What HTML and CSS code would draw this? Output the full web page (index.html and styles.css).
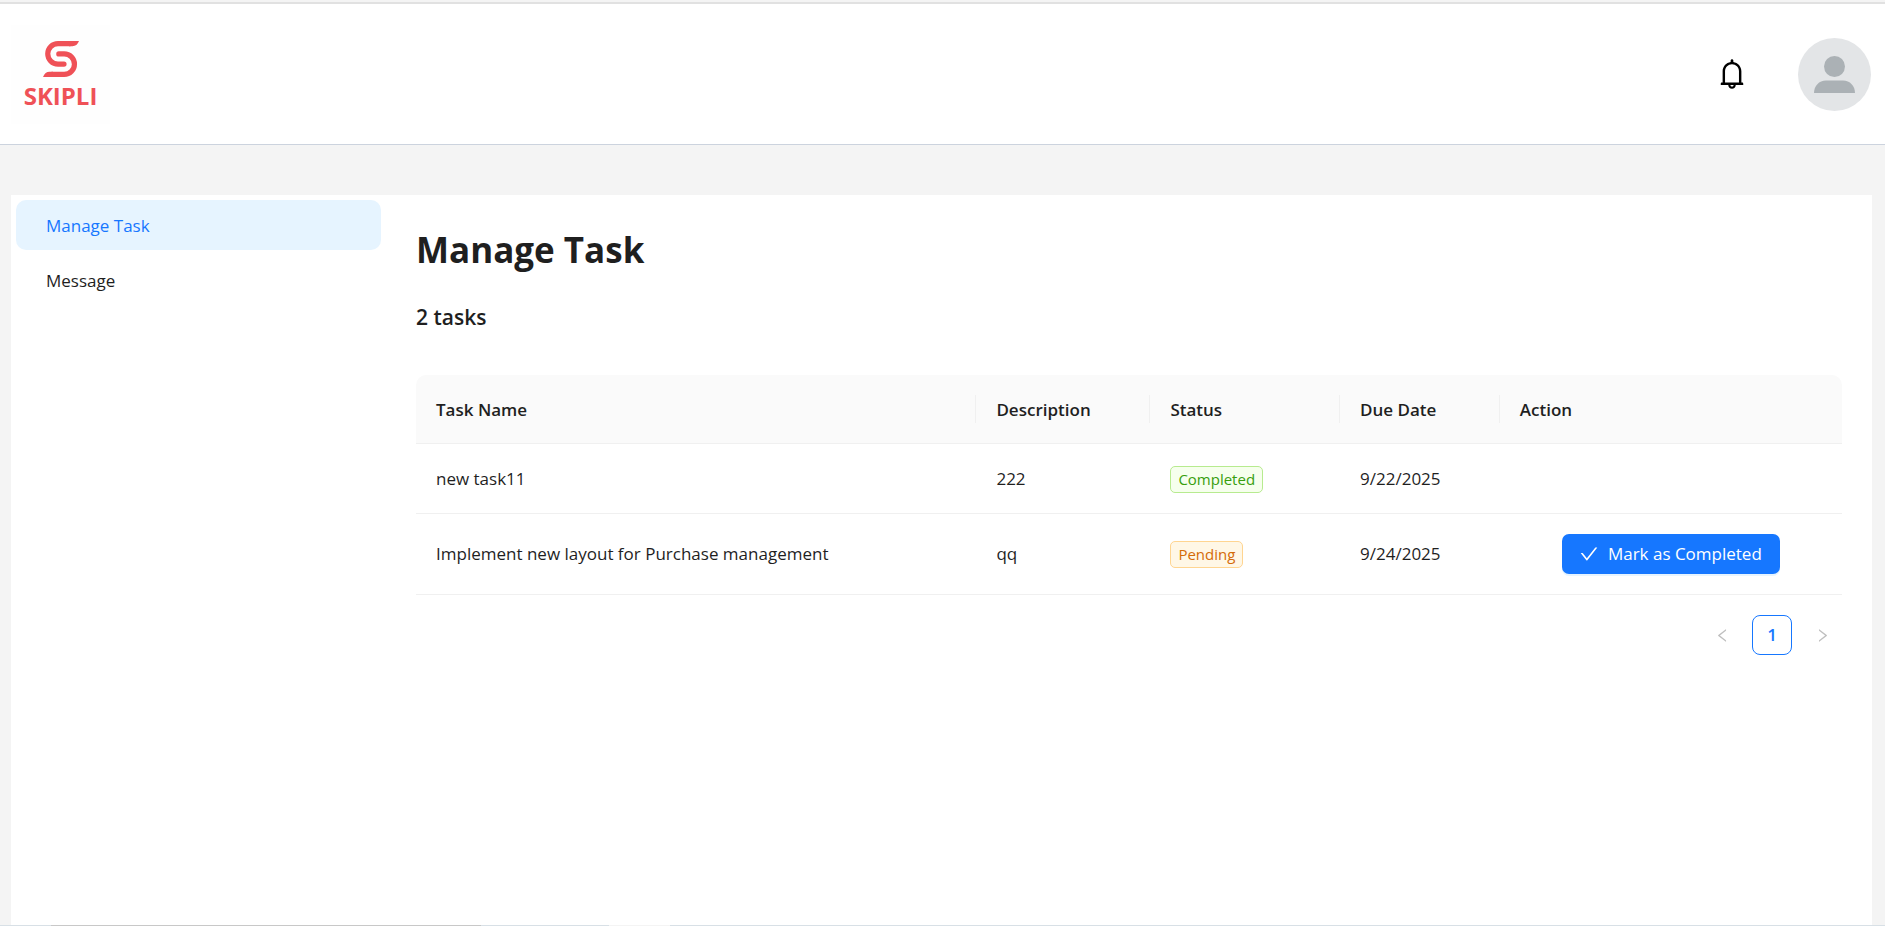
FILE: index.html
```html
<!DOCTYPE html>
<html lang="en">
<head>
<meta charset="utf-8">
<title>Manage Task</title>
<link rel="stylesheet" href="styles.css">
</head>
<body>
<div class="app">
  <header class="header">
    <a class="logo" href="#" aria-label="Skipli">
      <svg class="logo-mark" width="36" height="36" viewBox="0 0 36 36" fill="none" stroke="#ef5157" stroke-width="5.200" stroke-linecap="round">
        <path d="M27 2.600H15A10.250 10.250 0 0 0 15 23.100H21"/>
        <path d="M15.800 12.900H21.200A10.250 10.250 0 0 1 21.200 33.400H9"/>
        <path d="M26 0H36Q34 5.200 29.500 5.200H26ZM10 36H0Q2 30.800 6.500 30.800H10Z" fill="#ef5157" stroke="none"/>
      </svg>
      <span class="logo-text">SKIPLI</span>
    </a>
    <div class="header-actions">
      <button class="bell" type="button" aria-label="Notifications">
        <svg width="30" height="30" viewBox="64 64 896 896" fill="currentColor"><path d="M816 768h-24V428c0-141.100-104.300-257.700-240-277.100V112c0-22.100-17.900-40-40-40s-40 17.900-40 40v38.900c-135.700 19.400-240 136-240 277.100v340h-24c-17.700 0-32 14.300-32 32v32c0 4.400 3.600 8 8 8h216c0 61.800 50.200 112 112 112s112-50.200 112-112h216c4.400 0 8-3.600 8-8v-32c0-17.700-14.300-32-32-32zM512 888c-26.500 0-48-21.500-48-48h96c0 26.500-21.500 48-48 48zM304 768V428c0-55.600 21.600-107.800 60.900-147.100S456.400 220 512 220c55.600 0 107.800 21.600 147.100 60.900S720 372.400 720 428v340H304z"/></svg>
      </button>
      <button class="avatar" type="button" aria-label="Account">
        <svg width="73" height="73" viewBox="0 0 73 73"><circle cx="36.500" cy="36.500" r="36.500" fill="#e3e5e7"/><circle cx="36.500" cy="28.500" r="10.500" fill="#abb1b5"/><path d="M16 55C16 48 21 42.500 28 42.500H45C52 42.500 57 48 57 55Z" fill="#abb1b5"/></svg>
      </button>
    </div>
  </header>
  <div class="panel">
    <nav class="sidebar">
      <a class="menu-item active" href="#" aria-current="page">Manage Task</a>
      <a class="menu-item" href="#">Message</a>
    </nav>
    <main class="content">
      <h1>Manage Task</h1>
      <h2>2 tasks</h2>
      <table class="tasks">
        <colgroup><col class="c-name"><col class="c-desc"><col class="c-status"><col class="c-due"><col class="c-action"></colgroup>
        <thead>
          <tr><th>Task Name</th><th>Description</th><th>Status</th><th>Due Date</th><th>Action</th></tr>
        </thead>
        <tbody>
          <tr><td>new task11</td><td>222</td><td><span class="tag green">Completed</span></td><td>9/22/2025</td><td></td></tr>
          <tr><td>Implement new layout for Purchase management</td><td>qq</td><td><span class="tag orange">Pending</span></td><td>9/24/2025</td>
            <td class="action"><button class="primary" type="button"><svg width="18" height="18" viewBox="64 64 896 896" fill="currentColor"><path d="M912 190h-69.900c-9.800 0-19.100 4.500-25.100 12.200L404.700 724.500 207 474a32 32 0 0 0-25.100-12.200H112c-6.700 0-10.400 7.700-6.300 12.900l273.900 347c12.800 16.200 37.400 16.200 50.300 0l488.400-618.900c4.100-5.100.4-12.800-6.300-12.800z"/></svg>Mark as Completed</button></td></tr>
        </tbody>
      </table>
      <nav class="pagination" aria-label="Pages">
        <button type="button" disabled aria-label="Previous page"><svg width="15" height="15" viewBox="64 64 896 896" fill="currentColor"><path d="M724 218.300V141c0-6.700-7.700-10.400-12.900-6.300L260.300 486.800a31.860 31.860 0 0 0 0 50.300l450.800 352.100c5.300 4.100 12.900.4 12.900-6.300v-77.300c0-4.900-2.300-9.600-6.100-12.600l-360-281 360-281.100c3.800-3 6.100-7.700 6.100-12.600z"/></svg></button>
        <button type="button" class="current" aria-current="page">1</button>
        <button type="button" disabled aria-label="Next page"><svg width="15" height="15" viewBox="64 64 896 896" fill="currentColor"><path d="M765.700 486.800L314.900 134.700A7.970 7.970 0 0 0 302 141v77.300c0 4.900 2.300 9.600 6.100 12.600l360 281.100-360 281.100c-3.900 3-6.100 7.700-6.100 12.600V883c0 6.700 7.700 10.400 12.900 6.300l450.800-352.100a31.960 31.960 0 0 0 0-50.400z"/></svg></button>
      </nav>
    </main>
  </div>
  <footer class="edge"><span class="edge-dark"></span><span class="edge-light"></span></footer>
</div>
</body>
</html>
```
FILE: styles.css
```css
* { box-sizing: border-box; }
body {
  margin: 0;
  background: #f4f4f4;
  color: #1f1f1f;
  font: 17px/28px "Open Sans", "Noto Sans", sans-serif;
}
button { font: inherit; color: inherit; border: 0; padding: 0; background: none; }
a { color: inherit; text-decoration: none; }
svg { display: block; flex: none; }
.app { min-height: 100vh; display: flex; flex-direction: column; }
.header {
  display: flex;
  justify-content: space-between;
  align-items: center;
  height: 143px;
  margin-top: 2px;
  padding: 0 14px 0 11px;
  background: #fff;
  border-top: 2px solid #e1e1e1;
  border-bottom: 1px solid #ccd3de;
}
.logo {
  display: flex;
  flex-direction: column;
  align-items: center;
  width: 99px;
  height: 99px;
  padding: 16px 0 0;
  background: #fefefe;
  color: #ef5157;
}
.logo-text { margin-top: 5px; font: 700 24px/28px "Open Sans", sans-serif; }
.header-actions { display: flex; align-items: center; gap: 51px; }
.bell { color: #000; }
.panel {
  flex: 1;
  display: flex;
  margin: 50px 13px 0 11px;
  background: #fff;
}
.sidebar { width: 375px; flex: none; padding: 5px; }
.menu-item {
  display: block;
  height: 50px;
  margin-bottom: 5px;
  padding: 0 30px;
  line-height: 52px;
  border-radius: 10px;
}
.menu-item.active { background: #e6f4ff; color: #1677ff; }
.content { flex: 1; min-width: 0; padding: 30px 30px 0; }
h1 { margin: 0; font-size: 35px; line-height: 50px; font-weight: 700; }
h2 { margin: 25px 0 40px; font-size: 21px; line-height: 35px; font-weight: 600; }
.tasks { width: 100%; table-layout: fixed; border-collapse: separate; border-spacing: 0; }
.c-name { width: 39.3%; }
.c-desc { width: 12.2%; }
.c-status { width: 13.3%; }
.c-due { width: 11.2%; }
.c-action { width: 24%; }
.tasks th, .tasks td { padding: 20px; text-align: left; border-bottom: 1px solid #f0f0f0; }
.tasks th {
  padding: 21px 20px 19px;
  font-weight: 600;
  background: linear-gradient(#f0f0f0, #f0f0f0) right center / 1px 28px no-repeat #fafafa;
}
.tasks th:first-child { border-top-left-radius: 10px; }
.tasks th:last-child { border-top-right-radius: 10px; background: #fafafa; }
.tasks td { height: 70px; }
.tasks .action { text-align: center; }
.tag {
  display: inline-block;
  padding: 0 7px;
  font-size: 15px;
  line-height: 25px;
  border: 1px solid;
  border-radius: 5px;
}
.tag.green { color: #389e0d; background: #f6ffed; border-color: #b7eb8f; }
.tag.orange { color: #d46b08; background: #fff7e6; border-color: #ffd591; }
.primary {
  display: inline-flex;
  align-items: center;
  gap: 10px;
  height: 40px;
  padding: 0 18px;
  vertical-align: top;
  color: #fff;
  background: #1677ff;
  border-radius: 7px;
  box-shadow: 0 2px 0 rgba(5, 145, 255, 0.1);
}
.pagination { display: flex; justify-content: flex-end; gap: 10px; margin: 20px 0; }
.pagination button {
  display: grid;
  place-items: center;
  width: 40px;
  height: 40px;
  color: #bfbfbf;
}
.pagination .current { color: #1677ff; font-weight: 600; border: 1px solid #1677ff; border-radius: 8px; }
.edge { display: flex; height: 1px; padding-left: 51px; background: #d8e0e6; }
.edge-dark { width: 430px; background: #c8c8c8; }
.edge-light { width: 61px; margin-left: 128px; background: #f4f4f4; }
```
